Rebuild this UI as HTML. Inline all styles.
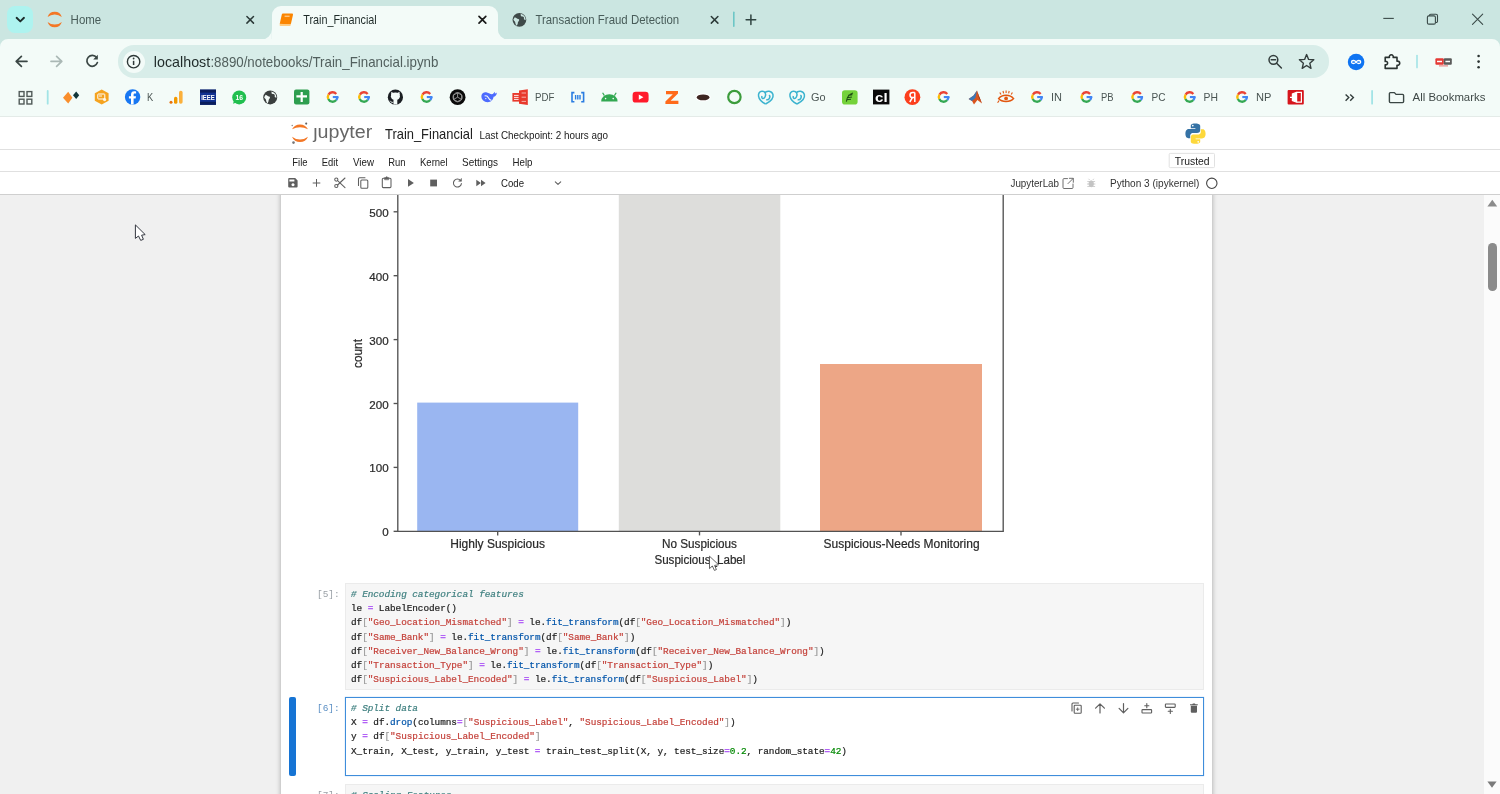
<!DOCTYPE html>
<html>
<head>
<meta charset="utf-8">
<title>Train_Financial</title>
<style>
*{box-sizing:border-box;margin:0;padding:0}
html,body{width:1500px;height:794px;overflow:hidden;background:#f0f0f0;font-family:"Liberation Sans",sans-serif;}
.abs{position:absolute}
svg.abs,.code,.prompt{will-change:transform}
#root{position:relative;width:1500px;height:794px;overflow:hidden}
.t{position:absolute;white-space:nowrap;line-height:1;transform-origin:0 50%}
/* chrome */
#tabstrip{left:0;top:0;width:1500px;height:40px;background:#cbe6e1}
#toolbar{left:0;top:39px;width:1500px;height:78px;background:#f3fbf8}
#chromeborder{left:0;top:116px;width:1500px;height:1px;background:#e4ebe8}
#tabsearch{left:6.6px;top:6px;width:26.6px;height:26.8px;border-radius:8px;background:#aef3ef}
#activetab{left:271.6px;top:6px;width:226.4px;height:34px;background:#f3fbf8;border-radius:9px 9px 0 0}
.tabcurve{position:absolute;bottom:0;width:9px;height:9px;background:#f3fbf8}
.tabcurve:after{content:"";position:absolute;left:0;top:0;width:9px;height:9px;background:#cbe6e1}
#urlbar{left:118px;top:45px;width:1211px;height:33px;border-radius:16px;background:#d8ede9}
#infocirc{left:122.6px;top:50.7px;width:22px;height:22px;border-radius:11px;background:#f3fbf8}
/* jupyter */
#jhead{left:0;top:117px;width:1500px;height:33px;background:#fff;border-bottom:1px solid #e0e0e0}
#jmenu{left:0;top:150px;width:1500px;height:22px;background:#fff;border-bottom:1px solid #e0e0e0}
#jtool{left:0;top:172px;width:1500px;height:23px;background:#fff;border-bottom:1px solid #cfcfcf}
#nbbg{left:0;top:195px;width:1484px;height:599px;background:#f0f0f0}
#paper{left:281px;top:185px;width:931px;height:620px;background:#fff;box-shadow:0 0 5px 0 rgba(0,0,0,.32)}
#sbar{left:1484px;top:195px;width:16px;height:599px;background:#fbfbfb}
#sthumb{left:1488.2px;top:243px;width:8.6px;height:48px;border-radius:4.3px;background:#8b8b8b}
.menu{font-size:11px;color:#212121;top:156px}
.code{position:absolute;left:351px;font-family:"Liberation Mono",monospace;font-size:9.4px;line-height:14.17px;white-space:pre;letter-spacing:-0.055px;-webkit-text-stroke:0.2px;color:#212121}
.c{color:#408080;font-style:italic}
.s{color:#c4413a}
.o{color:#b262f6;font-weight:bold}
.f{color:#0055aa}
.n{color:#008800}
.b{color:#999}
.prompt{position:absolute;font-family:"Liberation Mono",monospace;font-size:9.45px;line-height:14.2px;color:#9aa0a6}
.cht{position:absolute;font-size:12px;color:#262626;white-space:nowrap;line-height:1}
</style>
</head>
<body>
<div id="root">
<!-- ===== CHROME ===== -->
<div id="tabstrip" class="abs"></div>
<div id="toolbar" class="abs"></div>
<div id="chromeborder" class="abs"></div>
<div id="tabsearch" class="abs"></div>
<div id="activetab" class="abs"></div>
<div id="urlbar" class="abs"></div>
<div id="infocirc" class="abs"></div>
<svg class="abs" style="left:0;top:0" width="1500" height="117" viewBox="0 0 1500 117" font-family="Liberation Sans, sans-serif">
<path d="M261.6 39.5 H271.800 V29.300 A10.200 10.200 0 0 1 261.600 39.500 Z" fill="#f3fbf8"/>
<path d="M508 39.5 H497.800 V29.300 A10.200 10.200 0 0 0 508 39.500 Z" fill="#f3fbf8"/>
<path d="M0 39 H8 A8 8 0 0 0 0 47 Z" fill="#cbe6e1"/>
<path d="M1500 39 H1492 A8 8 0 0 1 1500 47 Z" fill="#cbe6e1"/>
<path d="M16.6 17.8 L20.3 21.4 L24 17.8" stroke="#1c2b2a" stroke-width="1.9" fill="none" stroke-linecap="round" stroke-linejoin="round"/>
<path d="M47.6 17 A7.4 7.4 0 0 1 61.8 17 A11 11 0 0 0 47.6 17 Z" fill="#f37726"/>
<path d="M47.6 22 A7.4 7.4 0 0 0 61.8 22 A11 11 0 0 1 47.6 22 Z" fill="#f37726"/>
<text x="70.6" y="24.3" textLength="30.6" lengthAdjust="spacingAndGlyphs" font-size="11.9" fill="#485c59" >Home</text>
<path d="M246.89999999999998 16.5 L253.5 23.1 M253.5 16.5 L246.89999999999998 23.1" stroke="#2c3a38" stroke-width="1.5" fill="none" stroke-linecap="round"/>
<g transform="translate(279.6,13)"><path d="M3.4 0.6 H12.4 a1 1 0 0 1 1 1.2 L11.4 10.6 a1.2 1.2 0 0 1 -1.2 1 H1.2 a1 1 0 0 1 -1 -1.2 L2.2 1.6 a1.2 1.2 0 0 1 1.2 -1 z" fill="#fb8500"/><path d="M0.4 10.8 L0.1 12 a0.8 0.8 0 0 0 .8 1 H10 a1.2 1.2 0 0 0 1.2 -1 L11.5 10.6 a1.2 1.2 0 0 1 -1.2 1 z" fill="#ffcc80"/><path d="M5 3.2 h5" stroke="#ffe0b2" stroke-width="1"/></g>
<text x="303.2" y="24.3" textLength="73.6" lengthAdjust="spacingAndGlyphs" font-size="11.9" fill="#1f2b29" >Train_Financial</text>
<path d="M479.0 16.400000000000002 L485.79999999999995 23.2 M485.79999999999995 16.400000000000002 L479.0 23.2" stroke="#1a1a1a" stroke-width="1.7" fill="none" stroke-linecap="round"/>
<g transform="translate(519.4,19.8)"><circle r="6.9" fill="#3f4a49"/><path d="M-4.6 -2.6 c1.6 .4 2.2 1.6 3.4 1.8 c1.4 .2 1.2 1.6 .2 2.4 c-1 .8 -.2 2.2 -1 3 l-.6 1.4 c-1.2 -1 -1.4 -2.4 -1.6 -3.6 c-.2 -1 -1.6 -1.4 -1.8 -2.6 z M1.2 -6 c.4 1 -.2 1.8 .6 2.4 c.8 .6 2 .2 2.6 1 c.6 .8 -.4 1.6 .4 2.4 l1.4 .6 c.2 -2.8 -1.4 -5.6 -5 -6.4 z" fill="#cbe6e1"/></g>
<text x="535.4" y="24.3" textLength="143.8" lengthAdjust="spacingAndGlyphs" font-size="11.9" fill="#485c59" >Transaction Fraud Detection</text>
<path d="M711.3000000000001 16.5 L717.9 23.1 M717.9 16.5 L711.3000000000001 23.1" stroke="#2c3a38" stroke-width="1.5" fill="none" stroke-linecap="round"/>
<rect x="733" y="11.5" width="1.6" height="15.5" rx="0.8" fill="#6cc6c6"/>
<path d="M750.9 15 V24.4 M746.100 19.700 H755.700" stroke="#2f4340" stroke-width="1.5" fill="none" stroke-linecap="round"/>
<path d="M1383.3 18.4 H1393.8" stroke="#3a4a48" stroke-width="1.1" fill="none"/>
<rect x="1427.4" y="15.9" width="8" height="8.200" rx="1.4" stroke="#3a4a48" stroke-width="1.1" fill="none"/><path d="M1429.400 15.800 V15.600 a1.300 1.300 0 0 1 1.300 -1.300 H1436 a1.500 1.500 0 0 1 1.500 1.500 V21.200 a1.300 1.300 0 0 1 -1.300 1.300 H1435.600" stroke="#3a4a48" stroke-width="1.1" fill="none"/>
<path d="M1472.5 14.1 L1482.7 24.300 M1482.700 14.100 L1472.500 24.300" stroke="#3a4a48" stroke-width="1.1" fill="none" stroke-linecap="round"/>
<path d="M27 61.3 H16.6 M21.4 56.3 L16.2 61.3 L21.4 66.3" stroke="#3a4644" stroke-width="1.7" fill="none" stroke-linecap="round" stroke-linejoin="round"/>
<path d="M51 61.3 H61.4 M56.6 56.3 L61.8 61.3 L56.6 66.3" stroke="#aab8b5" stroke-width="1.7" fill="none" stroke-linecap="round" stroke-linejoin="round"/>
<path d="M96.6 57.6 A5.4 5.4 0 1 0 97.4 62.6" stroke="#3a4644" stroke-width="1.7" fill="none" stroke-linecap="round"/><path d="M97.8 54.8 V59.4 H93.2 Z" fill="#3a4644"/>
<circle cx="133.6" cy="61.7" r="6.2" stroke="#2e3938" stroke-width="1.4" fill="none"/><path d="M133.6 60.8 V65" stroke="#2e3938" stroke-width="1.5" fill="none"/><circle cx="133.6" cy="58.5" r="0.9" fill="#2e3938"/>
<text x="153.8" y="66.7" textLength="56.4" lengthAdjust="spacingAndGlyphs" font-size="14.2" fill="#1f2a29" >localhost</text>
<text x="210.4" y="66.7" textLength="228" lengthAdjust="spacingAndGlyphs" font-size="14.2" fill="#52605e" >:8890/notebooks/Train_Financial.ipynb</text>
<circle cx="1273.4" cy="59.8" r="4.4" stroke="#333d3c" stroke-width="1.5" fill="none"/><path d="M1276.6 63.2 L1281.4 68 M1271.2 59.8 H1275.6" stroke="#333d3c" stroke-width="1.5" fill="none" stroke-linecap="round"/>
<path d="M1306.6 54.6 L1308.6 59.4 L1313.8 59.8 L1309.8 63.2 L1311 68.3 L1306.6 65.5 L1302.2 68.3 L1303.4 63.2 L1299.4 59.8 L1304.6 59.4 Z" stroke="#333d3c" stroke-width="1.4" fill="none" stroke-linejoin="round"/>
<circle cx="1356.1" cy="62" r="8.3" fill="#0f74f2"/><path d="M1356.1 62 c-1.2 -2 -4.6 -2 -4.6 0 c0 2 3.4 2 4.6 0 c1.2 -2 4.6 -2 4.6 0 c0 2 -3.4 2 -4.6 0 z" stroke="#fff" stroke-width="1.3" fill="none"/>
<path d="M1385.2 57.4 H1389.4 a2 2 0 1 1 3.8 0 H1397 V61.2 a2.1 2.1 0 1 1 0 4 V68.4 H1385.2 V64.8 a1.8 1.8 0 1 0 0 -3.4 Z" stroke="#2a3331" stroke-width="1.6" fill="none" stroke-linejoin="round"/>
<rect x="1416.2" y="54.8" width="1.6" height="13.6" rx="0.8" fill="#a2e4e6"/>
<rect x="1435.4" y="58.2" width="8.4" height="6.6" rx="1" fill="#e53935"/><rect x="1443.8" y="58.2" width="8" height="6.6" rx="1" fill="#5a5a5a"/><path d="M1437 61.5 h5 M1445.4 61.5 h4.6" stroke="#fff" stroke-width="1.4"/><rect x="1439" y="65.4" width="9" height="1" fill="#e57373"/>
<circle cx="1478.6" cy="56" r="1.3" fill="#2a3331"/><circle cx="1478.6" cy="61.6" r="1.3" fill="#2a3331"/><circle cx="1478.6" cy="67.2" r="1.3" fill="#2a3331"/>
<g fill="none" stroke="#505a58" stroke-width="1.4"><rect x="19.2" y="91.6" width="4.8" height="4.8"/><rect x="27" y="91.6" width="4.8" height="4.8"/><rect x="19.2" y="99.2" width="4.8" height="4.8"/><rect x="27" y="99.2" width="4.8" height="4.8"/></g>
<rect x="46.8" y="90" width="1.8" height="14.6" rx="0.9" fill="#a2e4e6"/>
<path d="M63 97.8 L68.2 91.8 L72.4 97.8 L68.2 103.4 Z" fill="#f98e2c"/><path d="M73 95.2 L76.2 91.4 L79.2 95.2 L76.2 99 Z" fill="#12363a"/>
<path d="M101.7 89.4 L108.6 93.2 V100.8 L101.7 104.6 L94.8 100.8 V93.2 Z" fill="#f5a31f"/><rect x="97.8" y="94" width="7" height="5" rx="0.6" fill="none" stroke="#fff" stroke-width="1"/><path d="M99 96 h3" stroke="#fff" stroke-width="0.9"/><circle cx="104.6" cy="99.6" r="1.6" fill="#fff" opacity=".85"/>
<circle cx="132.6" cy="97" r="7.7" fill="#1877f2"/><path d="M133.6 104.6 V98.6 h2 l.4 -2.4 h-2.4 v-1.4 c0 -.8 .4 -1.3 1.3 -1.3 h1.2 v-2.1 c-.6 -.1 -1.2 -.2 -1.9 -.2 c-2 0 -3.2 1.2 -3.2 3.3 v1.7 h-2.1 v2.4 h2.1 v6 z" fill="#fff"/>
<text x="147" y="100.8" textLength="6.2" lengthAdjust="spacingAndGlyphs" font-size="10.6" fill="#4a5553" >K</text>
<circle cx="171" cy="102.2" r="1.5" fill="#e8710a"/><rect x="174" y="96.8" width="3.4" height="7" rx="1.6" fill="#f29900"/><rect x="179" y="90.8" width="3.6" height="13" rx="1.7" fill="#fbb03b"/>
<rect x="200" y="89.6" width="16" height="15.2" fill="#10308f"/><rect x="200" y="89.6" width="16" height="3" fill="#0a1d5c"/><rect x="200" y="101.8" width="16" height="3" fill="#0a1d5c"/><text x="201.2" y="99.6" textLength="13.6" lengthAdjust="spacingAndGlyphs" font-size="6.6" fill="#fff" font-weight="bold">IEEE</text>
<circle cx="239.2" cy="97.4" r="7" fill="#21bf4f"/><path d="M233 103.8 l1 -3.4 l2.4 2.2 z" fill="#21bf4f"/><text x="235.4" y="100.2" textLength="7.6" lengthAdjust="spacingAndGlyphs" font-size="7.4" fill="#fff" font-weight="bold">16</text>
<g transform="translate(270.2,97.4)"><circle r="7" fill="#3a3f3e"/><path d="M-4.6 -2.6 c1.6 .4 2.2 1.6 3.4 1.8 c1.4 .2 1.2 1.6 .2 2.4 c-1 .8 -.2 2.2 -1 3 l-.6 1.4 c-1.2 -1 -1.4 -2.4 -1.6 -3.6 c-.2 -1 -1.6 -1.4 -1.8 -2.6 z M1.2 -6 c.4 1 -.2 1.8 .6 2.4 c.8 .6 2 .2 2.6 1 c.6 .8 -.4 1.6 .4 2.4 l1.4 .6 c.2 -2.8 -1.4 -5.6 -5 -6.4 z" fill="#f3fbf8"/></g>
<rect x="294" y="89.6" width="15.4" height="14.8" rx="2" fill="#2e9e4f"/><path d="M301.7 92 V102 M296.4 96.4 H307" stroke="#fff" stroke-width="2.2"/>
<g class="gg" fill="none" stroke-width="2.3"><path d="M336.24 93.95 A4.75 4.75 0 0 0 328.49 94.62" stroke="#ea4335"/><path d="M328.49 94.62 A4.75 4.75 0 0 0 328.30 99.01" stroke="#fbbc05"/><path d="M328.30 99.01 A4.75 4.75 0 0 0 336.24 100.05" stroke="#34a853"/><path d="M336.24 100.05 A4.75 4.75 0 0 0 337.35 97.00" stroke="#4285f4"/><path d="M332.80 97.05 H338.45" stroke="#4285f4" stroke-width="2.1"/></g>
<g class="gg" fill="none" stroke-width="2.3"><path d="M367.64 93.95 A4.75 4.75 0 0 0 359.89 94.62" stroke="#ea4335"/><path d="M359.89 94.62 A4.75 4.75 0 0 0 359.70 99.01" stroke="#fbbc05"/><path d="M359.70 99.01 A4.75 4.75 0 0 0 367.64 100.05" stroke="#34a853"/><path d="M367.64 100.05 A4.75 4.75 0 0 0 368.75 97.00" stroke="#4285f4"/><path d="M364.20 97.05 H369.85" stroke="#4285f4" stroke-width="2.1"/></g>
<g class="gg" fill="none" stroke-width="2.3"><path d="M430.24 93.95 A4.75 4.75 0 0 0 422.49 94.62" stroke="#ea4335"/><path d="M422.49 94.62 A4.75 4.75 0 0 0 422.30 99.01" stroke="#fbbc05"/><path d="M422.30 99.01 A4.75 4.75 0 0 0 430.24 100.05" stroke="#34a853"/><path d="M430.24 100.05 A4.75 4.75 0 0 0 431.35 97.00" stroke="#4285f4"/><path d="M426.80 97.05 H432.45" stroke="#4285f4" stroke-width="2.1"/></g>
<g class="gg" fill="none" stroke-width="2.3"><path d="M947.24 93.95 A4.75 4.75 0 0 0 939.49 94.62" stroke="#ea4335"/><path d="M939.49 94.62 A4.75 4.75 0 0 0 939.30 99.01" stroke="#fbbc05"/><path d="M939.30 99.01 A4.75 4.75 0 0 0 947.24 100.05" stroke="#34a853"/><path d="M947.24 100.05 A4.75 4.75 0 0 0 948.35 97.00" stroke="#4285f4"/><path d="M943.80 97.05 H949.45" stroke="#4285f4" stroke-width="2.1"/></g>
<g class="gg" fill="none" stroke-width="2.3"><path d="M1040.64 93.95 A4.75 4.75 0 0 0 1032.89 94.62" stroke="#ea4335"/><path d="M1032.89 94.62 A4.75 4.75 0 0 0 1032.70 99.01" stroke="#fbbc05"/><path d="M1032.70 99.01 A4.75 4.75 0 0 0 1040.64 100.05" stroke="#34a853"/><path d="M1040.64 100.05 A4.75 4.75 0 0 0 1041.75 97.00" stroke="#4285f4"/><path d="M1037.20 97.05 H1042.85" stroke="#4285f4" stroke-width="2.1"/></g>
<g class="gg" fill="none" stroke-width="2.3"><path d="M1090.04 93.95 A4.75 4.75 0 0 0 1082.29 94.62" stroke="#ea4335"/><path d="M1082.29 94.62 A4.75 4.75 0 0 0 1082.10 99.01" stroke="#fbbc05"/><path d="M1082.10 99.01 A4.75 4.75 0 0 0 1090.04 100.05" stroke="#34a853"/><path d="M1090.04 100.05 A4.75 4.75 0 0 0 1091.15 97.00" stroke="#4285f4"/><path d="M1086.60 97.05 H1092.25" stroke="#4285f4" stroke-width="2.1"/></g>
<g class="gg" fill="none" stroke-width="2.3"><path d="M1140.84 93.95 A4.75 4.75 0 0 0 1133.09 94.62" stroke="#ea4335"/><path d="M1133.09 94.62 A4.75 4.75 0 0 0 1132.90 99.01" stroke="#fbbc05"/><path d="M1132.90 99.01 A4.75 4.75 0 0 0 1140.84 100.05" stroke="#34a853"/><path d="M1140.84 100.05 A4.75 4.75 0 0 0 1141.95 97.00" stroke="#4285f4"/><path d="M1137.40 97.05 H1143.05" stroke="#4285f4" stroke-width="2.1"/></g>
<g class="gg" fill="none" stroke-width="2.3"><path d="M1193.34 93.95 A4.75 4.75 0 0 0 1185.59 94.62" stroke="#ea4335"/><path d="M1185.59 94.62 A4.75 4.75 0 0 0 1185.40 99.01" stroke="#fbbc05"/><path d="M1185.40 99.01 A4.75 4.75 0 0 0 1193.34 100.05" stroke="#34a853"/><path d="M1193.34 100.05 A4.75 4.75 0 0 0 1194.45 97.00" stroke="#4285f4"/><path d="M1189.90 97.05 H1195.55" stroke="#4285f4" stroke-width="2.1"/></g>
<g class="gg" fill="none" stroke-width="2.3"><path d="M1245.74 93.95 A4.75 4.75 0 0 0 1237.99 94.62" stroke="#ea4335"/><path d="M1237.99 94.62 A4.75 4.75 0 0 0 1237.80 99.01" stroke="#fbbc05"/><path d="M1237.80 99.01 A4.75 4.75 0 0 0 1245.74 100.05" stroke="#34a853"/><path d="M1245.74 100.05 A4.75 4.75 0 0 0 1246.85 97.00" stroke="#4285f4"/><path d="M1242.30 97.05 H1247.95" stroke="#4285f4" stroke-width="2.1"/></g>
<g transform="translate(395.4,97.2)"><circle r="7.6" fill="#1b1f23"/><ellipse cx="0" cy="-0.9" rx="4.5" ry="3.7" fill="#f3fbf8"/><path d="M-4.300 -1.800 L-4.100 -5.400 L-1.600 -3.900 Z M4.300 -1.800 L4.100 -5.400 L1.600 -3.900 Z" fill="#f3fbf8"/><path d="M-1.900 2 H1.900 V7.300 H-1.900 Z" fill="#f3fbf8"/><path d="M-2 5 c-1.600 .6 -2.400 -.2 -3.200 -1.400" stroke="#f3fbf8" stroke-width="1" fill="none"/></g>
<circle cx="457.6" cy="97.2" r="7.9" fill="#0a0a0a"/><g fill="none" stroke="#9a9a9a" stroke-width="0.9"><circle cx="457.6" cy="97.2" r="4.6"/><path d="M453.6 95 l4 -2.2 l4 2.2 v4.4 l-4 2.2 l-4 -2.2 z M457.600 92.800 v4.400 l4 2.200 M457.600 97.200 l-4 2.200"/></g>
<path d="M481.4 96.6 c0 -3.400 3 -4.600 5.400 -4.200 c2.200 .4 3.400 1.800 5 1.800 c1.400 0 2.400 -1.400 2.800 -2.400 c.4 .4 .4 1.200 .2 1.800 c.8 -.2 1.600 -.8 2 -1.200 c.2 2.600 -1.800 4 -3.200 4.400 c-.4 2.800 -2.400 5.400 -6 5.400 c-3.600 0 -6.200 -2.600 -6.200 -5.600 z" fill="#4d6bfe"/><path d="M484.600 96 c1.400 -.6 3 .2 3.800 1.800 c.6 1.400 1.800 2.400 3 2.600" stroke="#f3fbf8" stroke-width="1.100" fill="none"/><circle cx="485.800" cy="98.600" r=".7" fill="#f3fbf8"/>
<path d="M519 90.400 L527.800 89.200 V105 L519 103.800 Z" fill="#e8392c"/><rect x="512.400" y="93" width="8" height="8.600" fill="#e8392c"/><path d="M514 95.400 h4.600 M514 97.400 h4.600 M514 99.400 h4.600" stroke="#fff" stroke-width=".9"/><path d="M521.600 93 h4.400 M521.600 97.200 h4.400 M521.600 101.400 h4.400" stroke="#f7b0a8" stroke-width="1"/>
<text x="535" y="100.8" textLength="19.4" lengthAdjust="spacingAndGlyphs" font-size="10.8" fill="#4a5553" >PDF</text>
<g stroke="#2a7de1" fill="none" stroke-width="1.600"><path d="M574.400 92.600 H572 V101.800 H574.400 M581.200 92.600 H583.600 V101.800 H581.200"/><path d="M575.600 95 V99.600 M577.800 95 V99.600 M580 95 V99.600" stroke-width="1.400"/></g>
<path d="M601.200 101.600 a8.200 7.400 0 0 1 16.400 0 Z" fill="#32a852"/><path d="M604.400 95.600 L602.600 92.800 M614.400 95.600 L616.200 92.800" stroke="#32a852" stroke-width="1.200"/><circle cx="605.600" cy="98.600" r=".8" fill="#f3fbf8"/><circle cx="613.200" cy="98.600" r=".8" fill="#f3fbf8"/>
<rect x="632.600" y="91.800" width="16" height="10.800" rx="3.200" fill="#ff1a2b"/><path d="M638.800 94.600 L643.400 97.200 L638.800 99.800 Z" fill="#fff"/>
<path d="M666 91 H678 V93.600 L670.600 100.800 H678.400 V104 H665.400 V101.400 L672.800 94.200 H666 Z" fill="#ff6a1a"/>
<ellipse cx="703.100" cy="97.400" rx="7.600" ry="4.200" fill="#fff"/><ellipse cx="703.100" cy="97.400" rx="6.400" ry="2.900" fill="#3d2621"/>
<circle cx="734.400" cy="97" r="6.200" fill="none" stroke="#3c9c3c" stroke-width="2.200"/>
<g transform="translate(765.6,97.600)" fill="none" stroke="#3bb3cf" stroke-width="1.500"><path d="M0 6.400 C-9 2 -8.600 -6 -3.600 -6.400 C-.6 -6.600 1 -3.600 -.6 -.6 C-2 2 -4.600 1 -3.600 -1.600"/><path d="M-1 -4.600 C1 -7.400 6.400 -7 7.400 -3 C8.200 1 4 4.400 0 6.400 M3.400 -2.400 C5.400 -1 3.400 3 .6 2"/></g>
<g transform="translate(797,97.600)" fill="none" stroke="#3bb3cf" stroke-width="1.500"><path d="M0 6.400 C-9 2 -8.600 -6 -3.600 -6.400 C-.6 -6.600 1 -3.600 -.6 -.6 C-2 2 -4.600 1 -3.600 -1.600"/><path d="M-1 -4.600 C1 -7.400 6.400 -7 7.400 -3 C8.200 1 4 4.400 0 6.400 M3.400 -2.400 C5.400 -1 3.400 3 .6 2"/></g>
<text x="811" y="100.8" textLength="14.6" lengthAdjust="spacingAndGlyphs" font-size="10.8" fill="#4a5553" >Go</text>
<rect x="842" y="90.200" width="15.600" height="14.400" rx="2.800" fill="#74d23a"/><path d="M853 93 C849 94 847 97 846.400 101.600 M852.400 94.600 l-4.400 .8 M852 97 l-4.800 .8 M851 99.200 l-4.400 .6" stroke="#1e4d12" stroke-width="1.100" fill="none"/>
<rect x="873" y="89.600" width="16.400" height="14.800" fill="#0a0a0a"/><text x="875" y="102" textLength="12.6" lengthAdjust="spacingAndGlyphs" font-size="12.4" fill="#fff" font-weight="bold">cl</text>
<circle cx="912.400" cy="97.200" r="7.900" fill="#fc3f1d"/><path d="M914.800 92.400 V102 M914.800 92.400 H912.600 a2.500 2.500 0 0 0 0 5.200 H914.800 M912.400 97.600 L909.800 102" stroke="#fff" stroke-width="1.500" fill="none"/>
<path d="M968.600 99 L973.600 95.600 L977 90.400 L978.600 95 L982 103.600 L977.400 100 L974 104.400 L972 101 Z" fill="#d9541e"/><path d="M968.600 99 L973.600 95.600 L977 90.400 L975.400 98 L972 101 Z" fill="#3a78b8"/><path d="M977 90.400 L978.600 95 L982 103.600 L979 98 Z" fill="#8c2a10"/>
<path d="M998.600 98.600 C1002 94 1010 94 1013.600 98.600 C1010 102.600 1002 102.600 998.600 98.600 Z" fill="none" stroke="#e2560f" stroke-width="1.500"/><circle cx="1006.100" cy="98.400" r="1.900" fill="#e2560f"/><path d="M1001 94.600 L999.800 92.400 M1003.600 93.400 L1003 91 M1006.100 93 V90.600 M1008.600 93.400 L1009.200 91 M1011.200 94.600 L1012.400 92.400 M999 100.600 L997.600 102.800" stroke="#e2560f" stroke-width="1.100"/>
<text x="1051" y="100.8" textLength="11" lengthAdjust="spacingAndGlyphs" font-size="10.8" fill="#4a5553" >IN</text>
<text x="1101" y="100.8" textLength="12.6" lengthAdjust="spacingAndGlyphs" font-size="10.8" fill="#4a5553" >PB</text>
<text x="1151.6" y="100.8" textLength="14" lengthAdjust="spacingAndGlyphs" font-size="10.8" fill="#4a5553" >PC</text>
<text x="1203.6" y="100.8" textLength="14.4" lengthAdjust="spacingAndGlyphs" font-size="10.8" fill="#4a5553" >PH</text>
<text x="1256" y="100.8" textLength="15.4" lengthAdjust="spacingAndGlyphs" font-size="10.8" fill="#4a5553" >NP</text>
<rect x="1287.600" y="90" width="16.200" height="14.600" rx="1" fill="#d6151c"/><path d="M1296.600 92.400 H1301.400 V102.200 H1296.600 M1296.600 92.400 L1292.400 94 V100.600 L1296.600 102.200 Z M1290 97.300 h4" stroke="#fff" stroke-width="1.200" fill="none"/><path d="M1296.600 92.400 L1292.400 94 V100.600 L1296.600 102.200 Z" fill="#fff"/>
<path d="M1345.600 94.400 L1348.800 97.600 L1345.600 100.800 M1350.200 94.400 L1353.400 97.600 L1350.200 100.800" stroke="#333d3c" stroke-width="1.400" fill="none"/>
<rect x="1371.200" y="90" width="1.800" height="14.600" rx="0.900" fill="#a2e4e6"/>
<path d="M1389.400 93.600 a1 1 0 0 1 1 -1 H1394.400 L1396 94.400 H1402.600 a1 1 0 0 1 1 1 V101.600 a1 1 0 0 1 -1 1 H1390.400 a1 1 0 0 1 -1 -1 Z" stroke="#3a4644" stroke-width="1.400" fill="none" stroke-linejoin="round"/>
<text x="1412.6" y="101.4" textLength="72.8" lengthAdjust="spacingAndGlyphs" font-size="11.8" fill="#3f4947" >All Bookmarks</text>
</svg>
<!-- ===== JUPYTER ===== -->
<div id="nbbg" class="abs"></div>
<div id="paper" class="abs"></div>
<div id="jhead" class="abs"></div>
<div id="jmenu" class="abs"></div>
<div id="jtool" class="abs"></div>
<div id="sbar" class="abs"></div>
<div id="sthumb" class="abs"></div>

<!-- chart -->
<svg class="abs" style="left:282px;top:195px" width="930" height="385" viewBox="282 195 930 385">
  <rect x="417.2" y="402.6" width="161" height="128.7" fill="#9ab6f1"/>
  <rect x="618.8" y="195" width="161.5" height="336.3" fill="#dddddb"/>
  <rect x="820" y="364" width="162" height="167.3" fill="#eda686"/>
  <g stroke="#525252" stroke-width="1.35" fill="none">
    <line x1="397.8" y1="195" x2="397.8" y2="531.8"/>
    <line x1="1003.2" y1="195" x2="1003.2" y2="531.8"/>
    <line x1="397.3" y1="531.3" x2="1003.7" y2="531.3"/>
    <line x1="393.6" y1="211.8" x2="397.8" y2="211.8"/>
    <line x1="393.6" y1="275.7" x2="397.8" y2="275.7"/>
    <line x1="393.6" y1="339.6" x2="397.8" y2="339.6"/>
    <line x1="393.6" y1="403.5" x2="397.8" y2="403.5"/>
    <line x1="393.6" y1="467.4" x2="397.8" y2="467.4"/>
    <line x1="393.6" y1="531.3" x2="397.8" y2="531.3"/>
    <line x1="497.7" y1="531.3" x2="497.7" y2="535.4"/>
    <line x1="699.5" y1="531.3" x2="699.5" y2="535.4"/>
    <line x1="901" y1="531.3" x2="901" y2="535.4"/>
  </g>
  <g font-family="Liberation Sans, sans-serif" font-size="11.6" fill="#2a2a2a" stroke="#2a2a2a" stroke-width="0.22">
    <g text-anchor="end">
      <text x="388.6" y="216.8">500</text>
      <text x="388.6" y="280.7">400</text>
      <text x="388.6" y="344.6">300</text>
      <text x="388.6" y="408.5">200</text>
      <text x="388.6" y="472.4">100</text>
      <text x="388.6" y="536.2">0</text>
    </g>
    <g text-anchor="middle" font-size="12">
      <text id="xl1" x="497.6" y="548.2" textLength="94.7" lengthAdjust="spacingAndGlyphs">Highly Suspicious</text>
      <text id="xl2" x="699.5" y="548.2" textLength="75" lengthAdjust="spacingAndGlyphs">No Suspicious</text>
      <text id="xl3" x="901.6" y="548.2" textLength="156" lengthAdjust="spacingAndGlyphs">Suspicious-Needs Monitoring</text>
      <text id="xl4" x="699.9" y="563.6" textLength="91" lengthAdjust="spacingAndGlyphs">Suspicious_Label</text>
      <text id="yl" transform="translate(361.5,353.5) rotate(-90)" textLength="29" lengthAdjust="spacingAndGlyphs">count</text>
    </g>
  </g>
</svg>

<!-- cell 5 -->
<div class="abs" style="left:345px;top:583px;width:859px;height:107px;background:#f6f6f6;border:1px solid #ebebeb"></div>
<div class="prompt" style="left:317.2px;top:588.1px">[5]:</div>
<div class="code" style="top:588.1px"><span class="c"># Encoding categorical features</span>
le <span class="o">=</span> LabelEncoder()
df<span class="b">[</span><span class="s">"Geo_Location_Mismatched"</span><span class="b">]</span> <span class="o">=</span> le.<span class="f">fit_transform</span>(df<span class="b">[</span><span class="s">"Geo_Location_Mismatched"</span><span class="b">]</span>)
df<span class="b">[</span><span class="s">"Same_Bank"</span><span class="b">]</span> <span class="o">=</span> le.<span class="f">fit_transform</span>(df<span class="b">[</span><span class="s">"Same_Bank"</span><span class="b">]</span>)
df<span class="b">[</span><span class="s">"Receiver_New_Balance_Wrong"</span><span class="b">]</span> <span class="o">=</span> le.<span class="f">fit_transform</span>(df<span class="b">[</span><span class="s">"Receiver_New_Balance_Wrong"</span><span class="b">]</span>)
df<span class="b">[</span><span class="s">"Transaction_Type"</span><span class="b">]</span> <span class="o">=</span> le.<span class="f">fit_transform</span>(df<span class="b">[</span><span class="s">"Transaction_Type"</span><span class="b">]</span>)
df<span class="b">[</span><span class="s">"Suspicious_Label_Encoded"</span><span class="b">]</span> <span class="o">=</span> le.<span class="f">fit_transform</span>(df<span class="b">[</span><span class="s">"Suspicious_Label"</span><span class="b">]</span>)</div>
<!-- cell 6 (active) -->
<div class="abs" style="left:289px;top:697px;width:6.5px;height:79px;background:#1674d4;border-radius:2px"></div>
<div class="abs" style="left:345px;top:697px;width:859px;height:79px;background:#fff;border:1px solid #3f8ddb;box-shadow:0 0 1px #8fbdea"></div>
<div class="prompt" style="left:317.2px;top:702.3px;color:#5b8fc4">[6]:</div>
<div class="code" style="top:702.3px"><span class="c"># Split data</span>
X <span class="o">=</span> df.<span class="f">drop</span>(columns<span class="o">=</span><span class="b">[</span><span class="s">"Suspicious_Label"</span>, <span class="s">"Suspicious_Label_Encoded"</span><span class="b">]</span>)
y <span class="o">=</span> df<span class="b">[</span><span class="s">"Suspicious_Label_Encoded"</span><span class="b">]</span>
X_train, X_test, y_train, y_test <span class="o">=</span> train_test_split(X, y, test_size<span class="o">=</span><span class="n">0.2</span>, random_state<span class="o">=</span><span class="n">42</span>)</div>
<!-- cell 7 -->
<div class="abs" style="left:345px;top:784.2px;width:859px;height:40px;background:#f6f6f6;border:1px solid #ebebeb"></div>
<div class="prompt" style="left:317.2px;top:789.3px">[7]:</div>
<div class="code" style="top:789.3px"><span class="c"># Scaling Features</span></div>
<svg class="abs" style="left:0;top:117px" width="1500" height="80" viewBox="0 117 1500 80" font-family="Liberation Sans, sans-serif">
<text x="385" y="138.9" textLength="87.8" lengthAdjust="spacingAndGlyphs" font-size="14.8" fill="#212121" >Train_Financial</text>
<text x="479.5" y="138.7" textLength="128.5" lengthAdjust="spacingAndGlyphs" font-size="10.6" fill="#212121" >Last Checkpoint: 2 hours ago</text>
<text x="292.3" y="165.6" textLength="15.2" lengthAdjust="spacingAndGlyphs" font-size="10.6" fill="#212121" >File</text>
<text x="321.8" y="165.6" textLength="16.2" lengthAdjust="spacingAndGlyphs" font-size="10.6" fill="#212121" >Edit</text>
<text x="353" y="165.6" textLength="21" lengthAdjust="spacingAndGlyphs" font-size="10.6" fill="#212121" >View</text>
<text x="388.2" y="165.6" textLength="17.3" lengthAdjust="spacingAndGlyphs" font-size="10.6" fill="#212121" >Run</text>
<text x="420" y="165.6" textLength="27.5" lengthAdjust="spacingAndGlyphs" font-size="10.6" fill="#212121" >Kernel</text>
<text x="462" y="165.6" textLength="36" lengthAdjust="spacingAndGlyphs" font-size="10.6" fill="#212121" >Settings</text>
<text x="512.5" y="165.6" textLength="20" lengthAdjust="spacingAndGlyphs" font-size="10.6" fill="#212121" >Help</text>
<text x="1174.8" y="164.6" textLength="34.8" lengthAdjust="spacingAndGlyphs" font-size="10.6" fill="#212121" >Trusted</text>
<text x="501" y="187.2" textLength="23" lengthAdjust="spacingAndGlyphs" font-size="10.6" fill="#212121" >Code</text>
<text x="1010.5" y="187.2" textLength="48.5" lengthAdjust="spacingAndGlyphs" font-size="10.4" fill="#333" >JupyterLab</text>
<text x="1110" y="187.2" textLength="89.4" lengthAdjust="spacingAndGlyphs" font-size="10.4" fill="#333" >Python 3 (ipykernel)</text>

<!-- jupyter logo -->
<g>
  <path d="M292 129.3 A9.16 9.16 0 0 1 308 129.3 A17 17 0 0 0 292 129.3 Z" fill="#f37726"/>
  <path d="M292 136.7 A8.63 8.63 0 0 0 308 136.7 A12.8 12.8 0 0 1 292 136.7 Z" fill="#f37726"/>
  <circle cx="306.2" cy="123.6" r="1.05" fill="#616161"/>
  <circle cx="292.2" cy="125.5" r="0.65" fill="#767677"/>
  <circle cx="293.5" cy="142.6" r="1.3" fill="#767677"/>
  <text x="313.2" y="137.7" font-size="17.6" fill="#666" textLength="59" lengthAdjust="spacingAndGlyphs">&#x237;upyter</text>
</g>
<!-- toolbar icons -->
<g fill="#5f5f5f" stroke="none">
  <!-- save -->
  <path d="M289.2 178.1 h6 l2.4 2.4 v6 a1 1 0 0 1 -1 1 h-7.4 a1 1 0 0 1 -1 -1 v-7.4 a1 1 0 0 1 1 -1 z M289.4 179.4 v2.2 h5 v-2.2 z M293 183.2 a1.55 1.55 0 1 0 0.01 0 z" fill-rule="evenodd"/>
  <!-- plus -->
  <path d="M316 179.1 h1 v3.3 h3.3 v1 h-3.3 v3.3 h-1 v-3.3 h-3.3 v-1 h3.3 z"/>
  <!-- play -->
  <path d="M408 179.1 L413.9 182.9 L408 186.7 Z"/>
  <!-- stop -->
  <rect x="430.2" y="179.6" width="6.8" height="6.8"/>
  <!-- ff -->
  <path d="M476.3 179.8 L480.900 183 L476.300 186.200 Z M481 179.800 L485.600 183 L481 186.200 Z"/>
</g>
<g fill="none" stroke="#5f5f5f" stroke-width="1.05" stroke-linecap="round" stroke-linejoin="round">
  <!-- scissors -->
  <circle cx="336.3" cy="179.6" r="1.6"/>
  <circle cx="336.3" cy="186" r="1.6"/>
  <path d="M337.6 180.6 L345 187.6 M337.6 185 L345 178"/>
  <!-- copy -->
  <path d="M358.5 185.5 V178.8 a1 1 0 0 1 1 -1 H365"/>
  <rect x="360.8" y="180" width="7" height="8.2" rx="1"/>
  <!-- paste -->
  <path d="M384.6 178.2 H383.3 a1 1 0 0 0 -1 1 V186.6 a1 1 0 0 0 1 1 H390 a1 1 0 0 0 1 -1 V179.2 a1 1 0 0 0 -1 -1 H388.7"/>
  <path d="M384.6 179.4 V177.6 H385.8 a0.9 0.9 0 0 1 1.8 0 H388.7 V179.4 Z" fill="#5f5f5f" stroke-width="0.6"/>
  <!-- refresh -->
  <path d="M460.6 180.6 A4 4 0 1 0 461.4 183.6"/>
  <path d="M461.5 178.7 V181.300 H458.900 Z" fill="#5f5f5f" stroke-width="0.5"/>
  <!-- chevron -->
  <path d="M555.3 181.8 L558 184.4 L560.7 181.8" stroke-width="1.1"/>
  <!-- external link -->
  <path d="M1067.5 178.6 H1064 a1 1 0 0 0 -1 1 V187.5 a1 1 0 0 0 1 1 H1072 a1 1 0 0 0 1 -1 V184" stroke-width="0.9"/>
  <path d="M1069.3 178.3 H1073.3 V182.3 M1073 178.6 L1068 183.6" stroke-width="0.9"/>
  <!-- kernel circle -->
  <circle cx="1211.8" cy="183.3" r="5.2" stroke="#444" stroke-width="1.1"/>
</g>
<!-- bug icon (disabled) -->
<g fill="#c4c4c4" stroke="#c4c4c4" stroke-width="0.8">
  <ellipse cx="1091.2" cy="183.8" rx="2.3" ry="3" />
  <path d="M1087.3 181.5 h7.8 M1087 184 h8.4 M1087.3 186.5 h7.8 M1089.6 180 l-1 -1.2 M1092.8 180 l1 -1.2" fill="none"/>
</g>
<!-- trusted box -->
<rect x="1169.2" y="153.4" width="45.3" height="14.2" rx="1" fill="none" stroke="#dedede" stroke-width="0.9"/>
<!-- python logo -->
<g>
  <path d="M1195.2 123.6 c-4.6 0 -4.4 2 -4.4 2 v2.6 h4.6 v0.8 h-6.6 s-3.4 -0.2 -3.4 4.6 c0 4.8 2.8 4.6 2.8 4.6 h2 v-2.5 s-0.1 -2.8 2.8 -2.8 h4.6 s2.6 0 2.6 -2.6 v-4.3 s0.4 -2.4 -5 -2.4 z" fill="#3572a5"/>
  <circle cx="1192.8" cy="125.6" r="0.85" fill="#fff"/>
  <path d="M1195.8 143.8 c4.6 0 4.4 -2 4.4 -2 v-2.6 h-4.6 v-0.8 h6.6 s3.4 0.2 3.4 -4.6 c0 -4.8 -2.8 -4.6 -2.8 -4.6 h-2 v2.5 s0.1 2.8 -2.8 2.8 h-4.6 s-2.6 0 -2.6 2.6 v4.3 s-0.4 2.4 5 2.4 z" fill="#fdd83b"/>
  <circle cx="1198.2" cy="141.8" r="0.85" fill="#fff"/>
</g>

</svg>

<!-- cell toolbar + scroll arrows + cursors -->
<svg class="abs" style="left:0;top:195px" width="1500" height="599" viewBox="0 195 1500 599">
<g fill="none" stroke="#5f5f5f" stroke-width="1.1" stroke-linecap="round" stroke-linejoin="round">
  <!-- duplicate -->
  <path d="M1072 711 V704 a1 1 0 0 1 1 -1 H1078.5"/>
  <rect x="1074.2" y="705.2" width="7" height="8" rx="0.8"/>
  <path d="M1077.7 707.8 v2.8 M1076.3 709.2 h2.8" stroke-width="0.9"/>
  <!-- up -->
  <path d="M1100 713 V704 M1095.6 708.2 L1100 703.8 L1104.4 708.2" stroke-width="1.2"/>
  <!-- down -->
  <path d="M1123.5 703.6 V712.6 M1119.1 708.4 L1123.5 712.8 L1127.9 708.4" stroke-width="1.2"/>
  <!-- insert above -->
  <rect x="1142" y="709.6" width="9.6" height="3.4" rx="0.6"/>
  <path d="M1146.8 703.6 v4.2 M1144.7 705.7 h4.2"/>
  <!-- insert below -->
  <rect x="1165.4" y="704" width="9.8" height="3.4" rx="0.6"/>
  <path d="M1170.3 709.2 v4.2 M1168.2 711.3 h4.2"/>
</g>
<!-- trash -->
<path d="M1190.8 705.8 h6.2 v6 a1 1 0 0 1 -1 1 h-4.2 a1 1 0 0 1 -1 -1 z M1190 704.2 h2.3 l0.6 -0.7 h2 l0.6 0.7 h2.3 v1 h-7.8 z" fill="#5f5f5f"/>
<!-- scroll arrows -->
<path d="M1487.4 206.6 L1492.300 199.800 L1497.200 206.600 Z" fill="#8b8b8b"/>
<path d="M1487.4 781.6 L1492 787.8 L1496.6 781.6 Z" fill="#7a7a7a"/>
<!-- mouse cursor 1 -->
<path d="M135.4 224.9 V238.4 L138.5 236 L140.7 240.4 L143.4 239.3 L141.6 235.2 L145.200 234.600 Z" fill="#fff" stroke="#33363f" stroke-width="1" stroke-linejoin="round"/>
<!-- mouse cursor 2 -->
<path d="M709.5 556.2 V568.600 L712.400 566 L714.400 570.400 L716.400 569.600 L714.600 565.400 L718.600 564.800 Z" fill="#fff" stroke="#4a4a4a" stroke-width="0.85" stroke-linejoin="round"/>
</svg>
<!--JUPYTER-CONTENT-->
</div>
</body>
</html>
